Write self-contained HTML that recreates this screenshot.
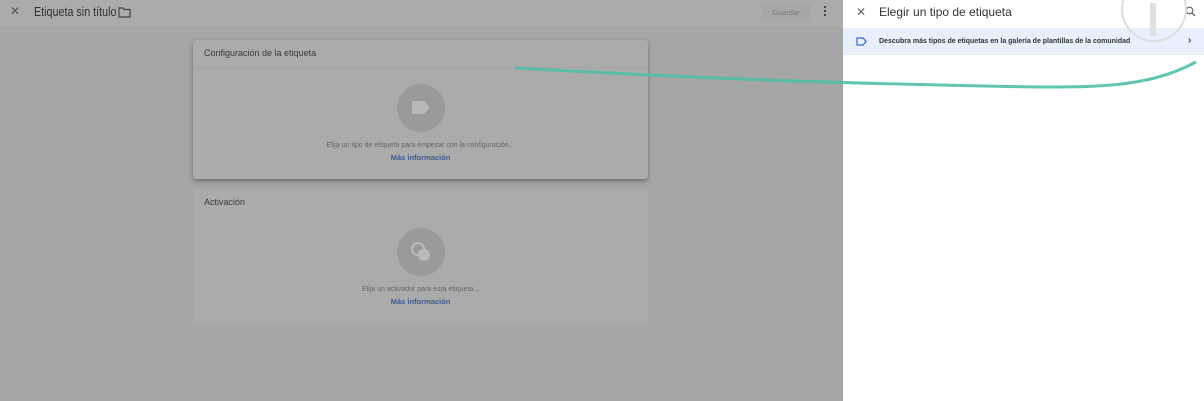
<!DOCTYPE html>
<html><head><meta charset="utf-8"><style>
body{margin:0;width:1204px;height:401px;overflow:hidden;font-family:"Liberation Sans",sans-serif;background:#a6a6a6;position:relative}
.top{position:absolute;left:0;top:0;width:843px;height:27px;background:#ababab;border-bottom:1px solid #a2a2a2}
.card{position:absolute;left:193px;width:455px;background:#ababab;border-radius:3px}
.t{position:absolute;font-size:12px;color:#3a3a3a}
.s{position:absolute;width:455px;text-align:center;font-size:7px;color:#666}
.l{position:absolute;width:455px;text-align:center;font-size:7.5px;color:#3d5c93;font-weight:bold}
.circ{position:absolute;left:204px;width:48px;height:48px;border-radius:50%;background:#9a9a9a}
.panel{position:absolute;left:843px;top:0;width:361px;height:401px;background:#fff}
</style></head><body>
<div class="top">
<div style="position:absolute;left:10px;top:4px;font-size:12px;color:#555">✕</div>
<div class="t" style="left:34px;top:5px;font-size:12.5px;color:#333;transform:scaleX(0.86);transform-origin:left;white-space:nowrap">Etiqueta sin título</div>
<svg style="position:absolute;left:118px;top:7px" width="13" height="11"><path d="M1 1h4l1 1.5h6v7.5h-11z" fill="none" stroke="#444" stroke-width="1.2"/></svg>
<div style="position:absolute;left:761px;top:4px;width:50px;height:17px;background:#a7a7a7;font-size:7.5px;color:#7a7a7a;text-align:center;line-height:17px">Guardar</div>
<div style="position:absolute;left:824px;top:6px;width:2px;height:2px;background:#444;box-shadow:0 4px #444,0 8px #444"></div>
</div>
<div class="card" style="top:40px;height:139px;box-shadow:0 2px 5px rgba(0,0,0,.35)">
<div class="t" style="left:11px;top:8px;font-size:9px">Configuración de la etiqueta</div>
<div style="position:absolute;left:0;top:27px;width:455px;border-top:1px solid #a3a3a3"></div>
<div class="circ" style="top:44px"><svg width="48" height="48"><path d="M15 18.5q0-1.5 1.5-1.5h11l5 6.5-5 6.5h-11q-1.5 0-1.5-1.5z" fill="#b8b8b8"/></svg></div>
<div class="s" style="top:102px">Elija un tipo de etiqueta para empezar con la configuración...</div>
<div class="l" style="top:113px">Más información</div>
</div>
<div class="card" style="top:189px;height:134px">
<div class="t" style="left:11px;top:8px;font-size:9px">Activación</div>
<div class="circ" style="top:39px"><svg width="48" height="48"><circle cx="21" cy="21" r="6" fill="none" stroke="#bbb" stroke-width="2"/><circle cx="27" cy="27" r="6" fill="#bbb"/></svg></div>
<div class="s" style="top:97px">Elija un activador para esta etiqueta...</div>
<div class="l" style="top:108px">Más información</div>
</div>
<div class="panel">
<div style="position:absolute;left:13px;top:5px;font-size:12px;color:#666">✕</div>
<div style="position:absolute;left:36px;top:5px;font-size:12px;color:#333">Elegir un tipo de etiqueta</div>
<svg style="position:absolute;left:342px;top:6px" width="11" height="11"><circle cx="4.5" cy="4.5" r="3.3" fill="none" stroke="#666" stroke-width="1.2"/><path d="M7 7l3 3" stroke="#666" stroke-width="1.3"/></svg>
<div style="position:absolute;left:0;top:28px;width:361px;height:27px;background:#e8f0fe"></div>
<svg style="position:absolute;left:13px;top:37px" width="11" height="9"><path d="M1 1h6l3 3.5-3 3.5h-6z" fill="none" stroke="#3367d6" stroke-width="1.2"/></svg>
<div style="position:absolute;left:36px;top:38px;font-size:7px;color:#333;font-weight:bold">Descubra más tipos de etiquetas en la galería de plantillas de la comunidad</div>
<div style="position:absolute;left:345px;top:35px;font-size:10px;color:#333;font-weight:bold">›</div>
<div style="position:absolute;left:278px;top:-24px;width:62px;height:62px;border-radius:50%;border:2px solid #ddd"></div>
<div style="position:absolute;left:307px;top:3px;width:6px;height:33px;background:#e0e0e0"></div>
</div>
<svg style="position:absolute;left:0;top:0" width="1204" height="401"><path d="M515 68 C 700 78, 800 82, 940 85 S 1140 92, 1196 62" fill="none" stroke="#4fbfa8" stroke-width="3" opacity=".9"/></svg>
</body></html>
